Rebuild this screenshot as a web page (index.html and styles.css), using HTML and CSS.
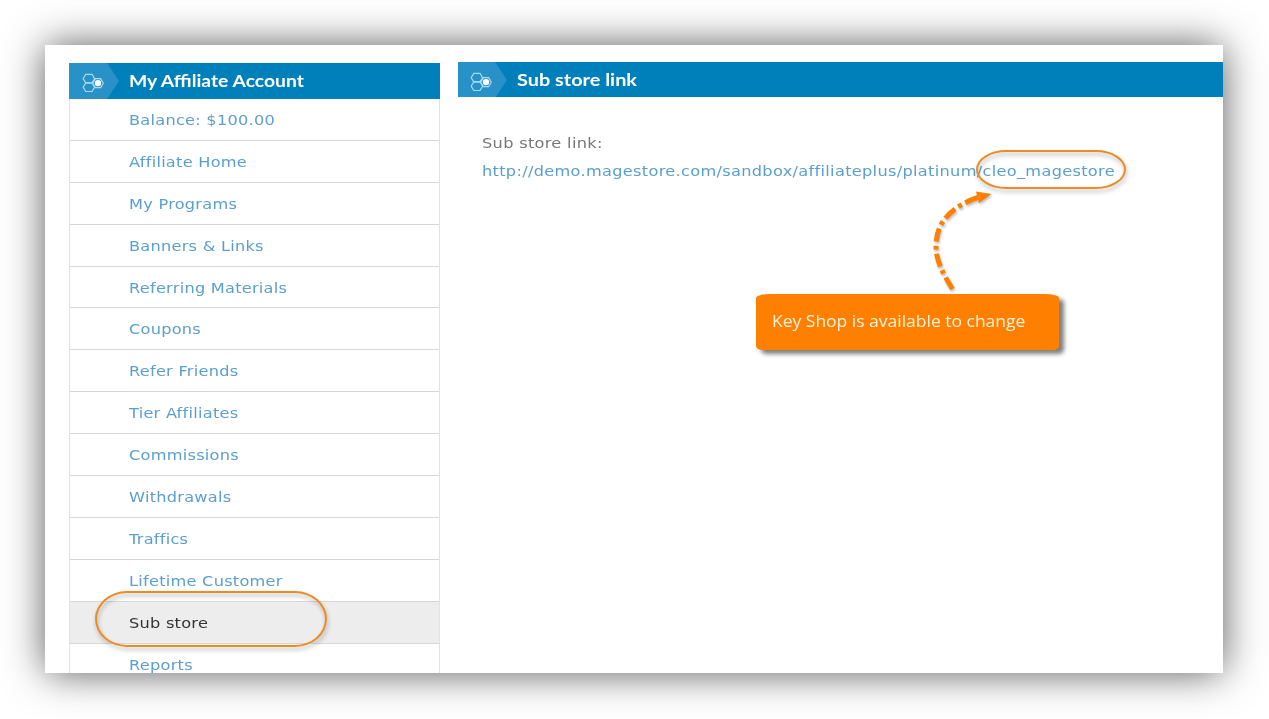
FILE: index.html
```html
<!DOCTYPE html>
<html lang="en">
<head>
<meta charset="utf-8">
<title>Sub store link</title>
<link rel="stylesheet" href="styles.css">
</head>
<body>
<svg class="defs" width="0" height="0" aria-hidden="true">
  <symbol id="hex" viewBox="0 0 50 36">
    <path d="M0 0H38L50 18L38 36H0Z" fill="#2892c8"/>
    <g fill="none" stroke="#a8daf1" stroke-width="1.2">
      <path d="M16.8 11.3h6.2l2.6 4.4-2.6 4.1h-6.2l-2.6-4.1z"/>
      <path d="M16.8 19.8h6.2l2.6 4.4-2.6 4.3h-6.2l-2.6-4.3z"/>
      <path d="M26.4 15.7h5.2l2.7 4.5-2.7 4.5h-5.2l-2.7-4.5z"/>
    </g>
    <circle cx="29" cy="20.1" r="3.2" fill="#fff"/>
  </symbol>
</svg>
<div class="sheet">
  <aside class="side">
    <h2 class="bar bar-side"><svg class="hex" width="50" height="36"><use href="#hex"/></svg><span class="title">My Affiliate Account</span></h2>
    <ul class="menu">
      <li><a>Balance: $100.00</a></li>
      <li><a>Affiliate Home</a></li>
      <li><a>My Programs</a></li>
      <li><a>Banners &amp; Links</a></li>
      <li><a>Referring Materials</a></li>
      <li><a>Coupons</a></li>
      <li><a>Refer Friends</a></li>
      <li><a>Tier Affiliates</a></li>
      <li><a>Commissions</a></li>
      <li><a>Withdrawals</a></li>
      <li><a>Traffics</a></li>
      <li><a>Lifetime Customer</a></li>
      <li class="active"><a>Sub store</a></li>
      <li><a>Reports</a></li>
    </ul>
  </aside>
  <main class="main">
    <h2 class="bar bar-main"><svg class="hex" width="50" height="36"><use href="#hex"/></svg><span class="title">Sub store link</span></h2>
    <div class="content">
      <p class="label">Sub store link:</p>
      <p class="url"><a>http://demo.magestore.com/sandbox/affiliateplus/platinum/cleo_magestore</a></p>
    </div>
  </main>
</div>
<div class="ring ring-menu"></div>
<div class="ring ring-url"></div>
<svg class="arrow" width="80" height="110" viewBox="925 185 80 110">
  <path d="M952.5 289C942 272 936 260 936 246C936 222 952 206 979 197" fill="none" stroke="#ff8000" stroke-width="5" stroke-dasharray="13.5 4 4 4"/>
  <path d="M976 191.5L991.5 194L979 203Z" fill="#ff8000"/>
</svg>
<div class="callout"><span>Key Shop is available to change</span></div>
</body>
</html>
```
FILE: styles.css
```css
* { box-sizing: border-box; }
body {
  margin: 0;
  width: 1269px;
  height: 719px;
  overflow: hidden;
  padding: 45px 0 0 45px;
  background: #fff;
  font-family: "DejaVu Sans", sans-serif;
  font-size: 14px;
  color: #777;
}
.defs { position: absolute; }
h2, p, ul { margin: 0; padding: 0; }
.sheet {
  display: flex;
  width: 1178px;
  height: 628px;
  overflow: hidden;
  background: #fff;
  box-shadow: 0 0 38px -1px rgba(0, 0, 0, 0.68);
}
.side {
  width: 371px;
  margin: 18px 18px 0 24px;
  flex: none;
}
.bar {
  display: flex;
  align-items: center;
  background: #0080bb;
  color: #fff;
  font: bold 17px/36px Lato, sans-serif;
  overflow: hidden;
}
.bar-side { height: 36px; }
.bar-main { height: 35px; }
.hex { flex: none; margin-right: 10px; }
.bar-main .hex { margin-left: -1px; }
.title { transform: scaleX(1.136); transform-origin: 0 50%; }
.bar-main .title { transform: scaleX(1.17); }
.menu {
  list-style: none;
  border: 1px solid #e2e2e2;
  border-top: 0;
}
.menu li {
  display: flex;
  align-items: center;
  height: 41.9px;
  padding: 1px 0 0 59px;
  border-bottom: 1px solid #d7d7d7;
  color: #5b9fcf;
}
.menu .active { background: #ededed; color: #333; }
.menu a, .label, .url a {
  display: inline-block;
  white-space: nowrap;
  letter-spacing: 0.22px;
  font-variant-ligatures: none;
  transform: scaleX(1.155);
  transform-origin: 0 50%;
}
.label, .url a { letter-spacing: 0.27px; }
.main { flex: 1; min-width: 0; padding-top: 17px; }
.content { padding: 32px 0 0 24px; line-height: 28px; }
.label { display: block; width: 200px; }
.url { color: #5b9fcf; }
.ring {
  position: absolute;
  border: 2px solid #ee8a22;
  filter: drop-shadow(1px 3px 2px rgba(0, 0, 0, 0.3));
}
.ring-menu { left: 95px; top: 591px; width: 232px; height: 56px; border-radius: 32px / 28px; }
.ring-url { left: 976px; top: 150px; width: 150px; height: 39px; border-radius: 31px / 20px; }
.arrow {
  position: absolute;
  left: 925px;
  top: 185px;
  filter: drop-shadow(1px 2px 1px rgba(0, 0, 0, 0.25));
}
.callout {
  position: absolute;
  left: 756px;
  top: 294px;
  width: 303px;
  height: 56px;
  padding-left: 16px;
  border-radius: 14px 14px 6px 6px / 4px;
  background: #ff8000;
  box-shadow: 5px 4px 4px rgba(0, 0, 0, 0.5);
  color: #fff3dc;
  font: 16px/54px "Open Sans", sans-serif;
  white-space: nowrap;
}
.callout span { display: inline-block; transform: scaleX(1.092); transform-origin: 0 50%; }
```
